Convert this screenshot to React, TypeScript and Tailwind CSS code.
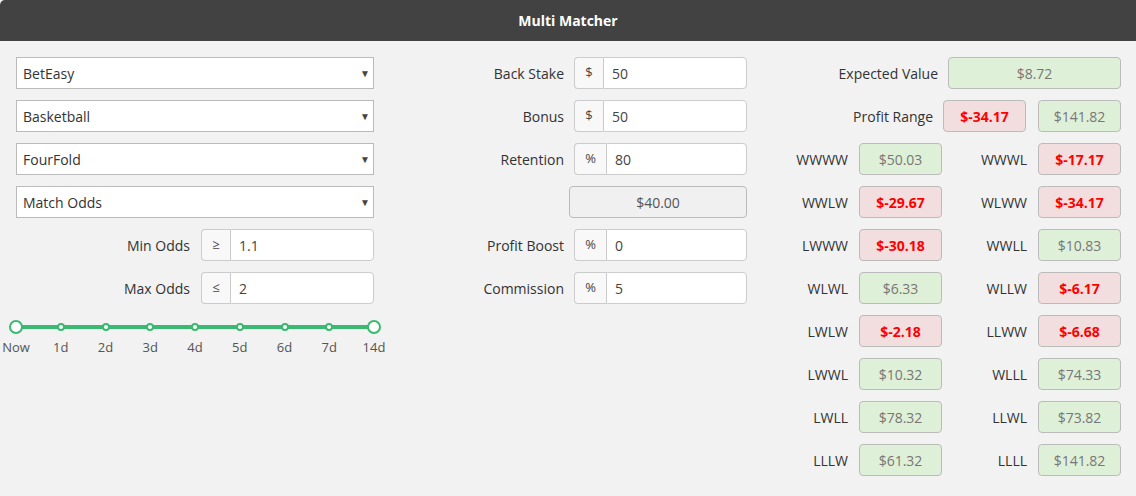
import React from 'react';

type Cell = { label: string; value: string; loss: boolean };

const outcomes: [Cell, Cell][] = [
  [{ label: 'WWWW', value: '$50.03', loss: false }, { label: 'WWWL', value: '$-17.17', loss: true }],
  [{ label: 'WWLW', value: '$-29.67', loss: true }, { label: 'WLWW', value: '$-34.17', loss: true }],
  [{ label: 'LWWW', value: '$-30.18', loss: true }, { label: 'WWLL', value: '$10.83', loss: false }],
  [{ label: 'WLWL', value: '$6.33', loss: false }, { label: 'WLLW', value: '$-6.17', loss: true }],
  [{ label: 'LWLW', value: '$-2.18', loss: true }, { label: 'LLWW', value: '$-6.68', loss: true }],
  [{ label: 'LWWL', value: '$10.32', loss: false }, { label: 'WLLL', value: '$74.33', loss: false }],
  [{ label: 'LWLL', value: '$78.32', loss: false }, { label: 'LLWL', value: '$73.82', loss: false }],
  [{ label: 'LLLW', value: '$61.32', loss: false }, { label: 'LLLL', value: '$141.82', loss: false }],
];

const ticks = ['Now', '1d', '2d', '3d', '4d', '5d', '6d', '7d', '14d'];

const Select = ({ value }: { value: string }) => (
  <div className="h-8 bg-white border border-[#bbbbbb] flex items-center justify-between pl-[6px] pr-[3px] text-[#333]">
    <span>{value}</span>
    <span className="text-[10px] text-[#444]">▼</span>
  </div>
);

const AddonInput = ({ addon, value, addonW }: { addon: string; value: string; addonW: string }) => (
  <div className="flex h-8 w-[173px]">
    <div className={`${addonW} flex items-center justify-center bg-[#f8f8f8] border border-[#cccccc] border-r-0 rounded-l text-[#444] text-[13px]`}>
      {addon}
    </div>
    <div className="flex-1 flex items-center bg-white border border-[#cccccc] rounded-r px-[8px] text-[#444]">{value}</div>
  </div>
);

const Box = ({ value, loss, w }: { value: string; loss: boolean; w: string }) => (
  <div
    className={`${w} h-8 rounded border border-[#bbbbbb] flex items-center justify-center ${
      loss ? 'bg-[#f2dede] text-[#ff0000] font-bold' : 'bg-[#dff0d8] text-[#777]'
    }`}
  >
    {value}
  </div>
);

export default function App() {
  return (
    <div className="w-[1136px] h-[496px] bg-[#f1f2f1] text-[14px] text-[#333] overflow-hidden" style={{ fontFamily: '"Open Sans", sans-serif' }}>
      <div className="h-[41px] bg-[#424242] rounded-tl-[5px] flex items-center justify-center text-white font-bold">
        Multi Matcher
      </div>
      <div className="flex pt-4 pl-4">
        {/* left */}
        <div className="w-[358px] flex flex-col gap-[11px]">
          <Select value="BetEasy" />
          <Select value="Basketball" />
          <Select value="FourFold" />
          <Select value="Match Odds" />
          <div className="flex items-center justify-end">
            <span className="mr-[11px]">Min Odds</span>
            <AddonInput addon="≥" value="1.1" addonW="w-[29px]" />
          </div>
          <div className="flex items-center justify-end">
            <span className="mr-[11px]">Max Odds</span>
            <AddonInput addon="≤" value="2" addonW="w-[29px]" />
          </div>
          <div className="relative h-[40px] mt-[2px] -mx-[7px]">
            <div className="absolute left-[8px] right-[8px] top-[8px] h-[4px] bg-[#3bb872]" />
            <div className="absolute inset-x-0 top-0 flex justify-between">
              {ticks.map((t, i) => {
                const end = i === 0 || i === ticks.length - 1;
                return (
                  <div key={t} className="relative w-[14px] h-[20px] flex items-center justify-center">
                    <div
                      className={
                        end
                          ? 'w-[14px] h-[14px] rounded-full bg-white border-2 border-[#3bb872]'
                          : 'w-[8px] h-[8px] rounded-full bg-white border-2 border-[#3bb872]'
                      }
                    />
                    <span className="absolute top-[21px] left-1/2 -translate-x-1/2 text-[13px] text-[#555] whitespace-nowrap">{t}</span>
                  </div>
                );
              })}
            </div>
          </div>
        </div>

        {/* middle */}
        <div className="w-[373px] flex flex-col gap-[11px]">
          <div className="flex items-center justify-end">
            <span className="mr-[10px]">Back Stake</span>
            <AddonInput addon="$" value="50" addonW="w-[29px]" />
          </div>
          <div className="flex items-center justify-end">
            <span className="mr-[10px]">Bonus</span>
            <AddonInput addon="$" value="50" addonW="w-[29px]" />
          </div>
          <div className="flex items-center justify-end">
            <span className="mr-[10px]">Retention</span>
            <AddonInput addon="%" value="80" addonW="w-[32px]" />
          </div>
          <div className="flex justify-end">
            <div className="w-[178px] h-8 rounded border border-[#bbbbbb] bg-[#f0f0f0] flex items-center justify-center text-[#555]">
              $40.00
            </div>
          </div>
          <div className="flex items-center justify-end">
            <span className="mr-[10px]">Profit Boost</span>
            <AddonInput addon="%" value="0" addonW="w-[32px]" />
          </div>
          <div className="flex items-center justify-end">
            <span className="mr-[10px]">Commission</span>
            <AddonInput addon="%" value="5" addonW="w-[32px]" />
          </div>
        </div>

        {/* right */}
        <div className="w-[374px] flex flex-col gap-[11px]">
          <div className="flex items-center justify-end">
            <span className="mr-[10px]">Expected Value</span>
            <Box value="$8.72" loss={false} w="w-[173px]" />
          </div>
          <div className="flex items-center justify-end">
            <span className="mr-[10px]">Profit Range</span>
            <Box value="$-34.17" loss={true} w="w-[83px]" />
            <div className="w-[12px]" />
            <Box value="$141.82" loss={false} w="w-[83px]" />
          </div>
          {outcomes.map(([a, b]) => (
            <div key={a.label} className="flex items-center justify-end">
              <span className="flex-1 text-right mr-[11px]">{a.label}</span>
              <Box value={a.value} loss={a.loss} w="w-[83px]" />
              <span className="w-[85px] text-right mr-[11px]">{b.label}</span>
              <Box value={b.value} loss={b.loss} w="w-[83px]" />
            </div>
          ))}
        </div>
      </div>
    </div>
  );
}
